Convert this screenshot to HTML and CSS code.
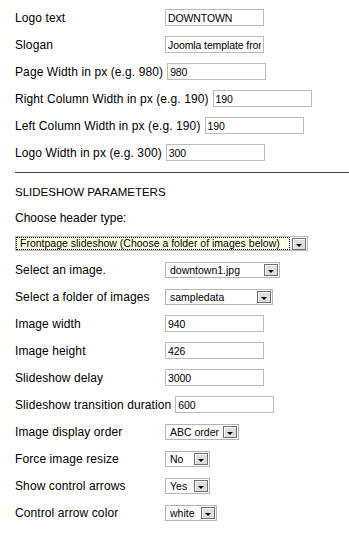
FILE: index.html
```html
<!DOCTYPE html>
<html>
<head>
<meta charset="utf-8">
<link rel="stylesheet" href="styles.css">
</head>
<body>
<div class="form">
  <div class="row"><span class="label">Logo text</span><input class="field" type="text" value="DOWNTOWN"></div>
  <div class="row"><span class="label">Slogan</span><input class="field" type="text" value="Joomla template from"></div>
  <div class="row"><span class="label">Page Width in px (e.g. 980)</span><input class="field" type="text" value="980"></div>
  <div class="row"><span class="label">Right Column Width in px (e.g. 190)</span><input class="field" type="text" value="190"></div>
  <div class="row"><span class="label">Left Column Width in px (e.g. 190)</span><input class="field" type="text" value="190"></div>
  <div class="row"><span class="label">Logo Width in px (e.g. 300)</span><input class="field" type="text" value="300"></div>
  <hr class="rule">
  <div class="row heading">SLIDESHOW PARAMETERS</div>
  <div class="row row-choose">Choose header type:</div>
  <div class="row row-big">
    <span class="select select-big"><span class="select-text focused">Frontpage slideshow (Choose a folder of images below)</span><span class="select-btn"></span></span>
  </div>
  <div class="row"><span class="label">Select an image.</span><span class="select w-image"><span class="select-text">downtown1.jpg</span><span class="select-btn"></span></span></div>
  <div class="row"><span class="label">Select a folder of images</span><span class="select w-folder"><span class="select-text">sampledata</span><span class="select-btn"></span></span></div>
  <div class="row"><span class="label">Image width</span><input class="field" type="text" value="940"></div>
  <div class="row"><span class="label">Image height</span><input class="field" type="text" value="426"></div>
  <div class="row"><span class="label">Slideshow delay</span><input class="field" type="text" value="3000"></div>
  <div class="row"><span class="label">Slideshow transition duration</span><input class="field" type="text" value="600"></div>
  <div class="row"><span class="label">Image display order</span><span class="select w-order"><span class="select-text">ABC order</span><span class="select-btn"></span></span></div>
  <div class="row"><span class="label">Force image resize</span><span class="select w-yesno"><span class="select-text">No</span><span class="select-btn"></span></span></div>
  <div class="row"><span class="label">Show control arrows</span><span class="select w-yesno"><span class="select-text">Yes</span><span class="select-btn"></span></span></div>
  <div class="row"><span class="label">Control arrow color</span><span class="select w-color"><span class="select-text">white</span><span class="select-btn"></span></span></div>
</div>
</body>
</html>
```
FILE: styles.css
```css
html, body {
  margin: 0;
  padding: 0;
  background: #fff;
}
body {
  font-family: "Liberation Sans", Arial, sans-serif;
  font-size: 12px;
  color: #000;
}
.form {
  padding: 4px 0 0 15px;
}
.row {
  display: flex;
  align-items: center;
  gap: 4px;
  height: 27px;
  white-space: nowrap;
}
.label {
  flex-shrink: 0;
  min-width: 146px;
  letter-spacing: 0.1px;
}
.field {
  box-sizing: border-box;
  width: 99px;
  height: 17px;
  margin: 0;
  padding: 0 2px;
  border: 1px solid #bcbcbc;
  background: #fff;
  font-family: "Liberation Sans", Arial, sans-serif;
  font-size: 10.5px;
  letter-spacing: -0.1px;
  color: #000;
  outline: none;
}
.rule {
  height: 0;
  margin: 6px 0 5px 0;
  border: 0;
  border-top: 1px solid #444;
}
.heading {
  font-size: 11.5px;
}
.row-choose {
  height: 26px;
}
.row-big {
  height: 25px;
}
.select {
  box-sizing: border-box;
  display: inline-flex;
  align-items: center;
  height: 16px;
  border: 1px solid #b5b5b5;
  background: #fff;
  font-size: 10.5px;
}
.select-text {
  flex: 1;
  padding-left: 4px;
  overflow: hidden;
}
.select-btn {
  position: relative;
  box-sizing: border-box;
  flex-shrink: 0;
  width: 14px;
  height: 12px;
  margin-right: 1px;
  border: 1px solid #6f6f6f;
  background: #dedede;
  box-shadow: inset 1px 1px 0 #fff;
}
.select-btn::after {
  content: "";
  position: absolute;
  left: 3px;
  top: 5px;
  border-left: 3px solid transparent;
  border-right: 3px solid transparent;
  border-top: 3px solid #000;
}
.select-big {
  width: 293px;
  height: 15px;
}
.select-big .select-text.focused {
  box-sizing: border-box;
  height: 13px;
  line-height: 11px;
  margin-right: 2px;
  padding-left: 3px;
  border: 1px dotted #000;
  background: #ffffe1;
}
.w-image { width: 115px; }
.w-folder { width: 108px; }
.w-order { width: 74px; }
.w-yesno { width: 45px; }
.w-color { width: 52px; }
```
